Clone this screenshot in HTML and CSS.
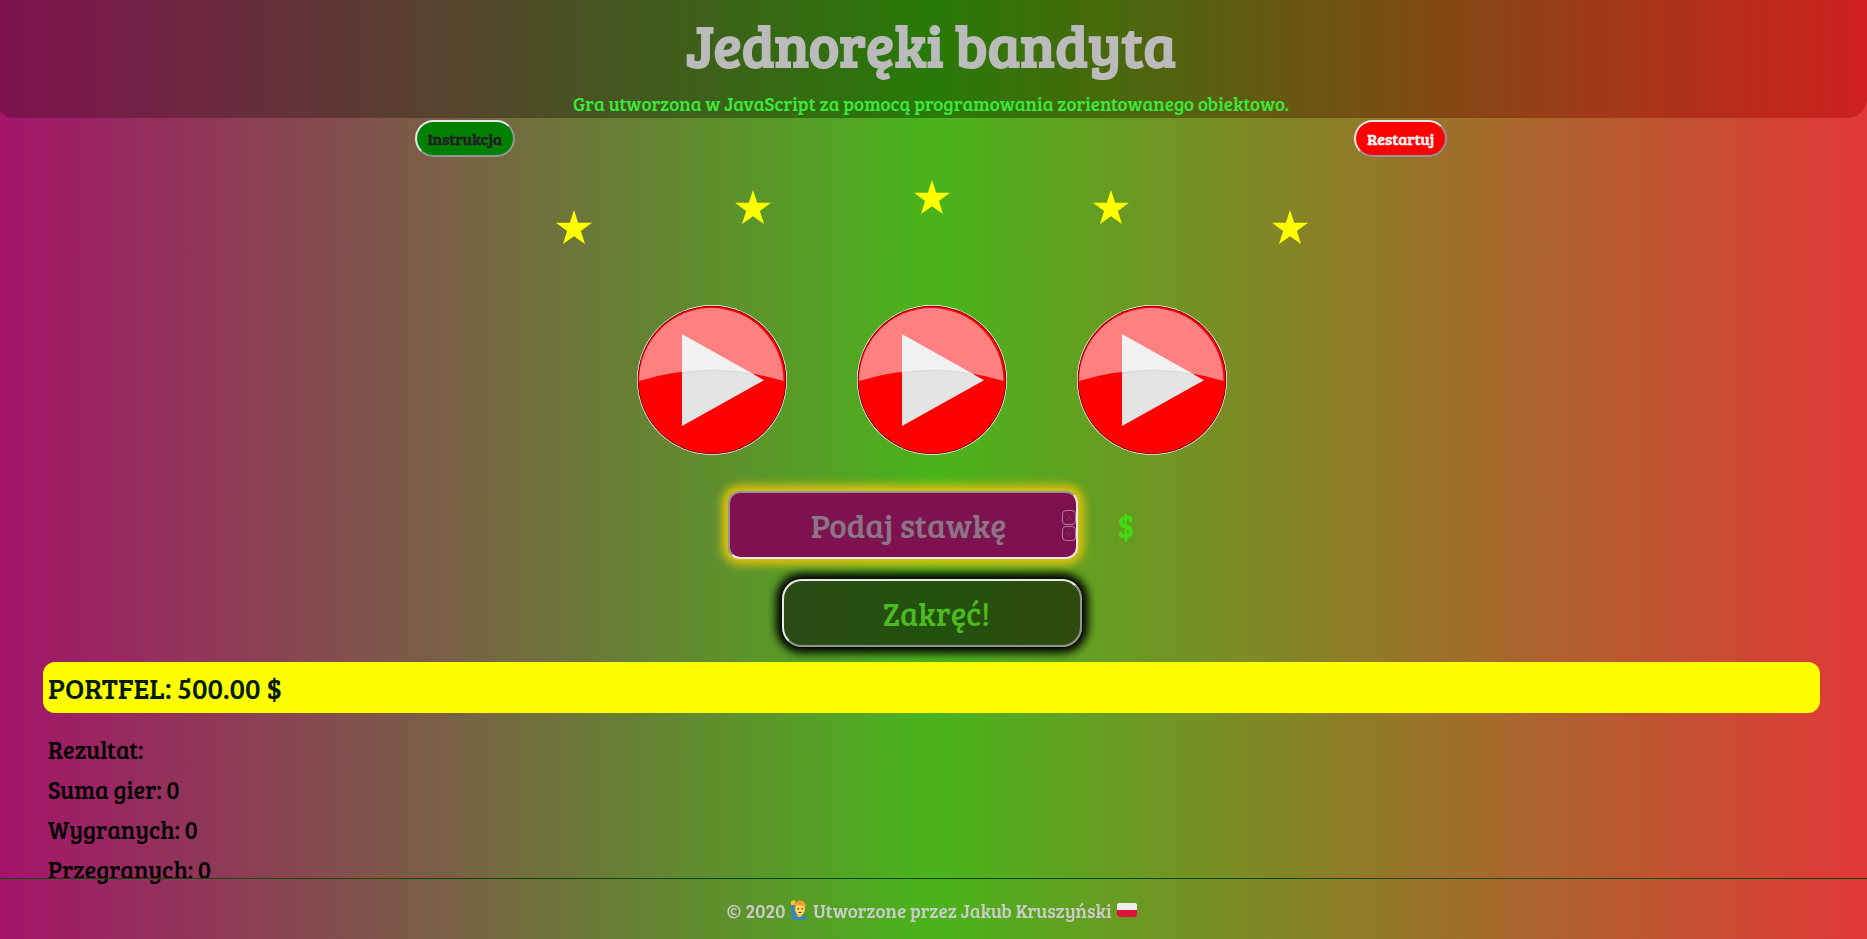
FILE: index.html
```html
<!DOCTYPE html>
<html lang="pl">
<head>
<meta charset="utf-8">
<title>Jednoręki bandyta</title>
<link rel="stylesheet" href="styles.css">
</head>
<body>
<svg class="sprites" aria-hidden="true">
  <symbol id="star" viewBox="0 0 36 34"><path fill="#ff0" d="M18 0l4.2 12.8H36L24.9 21l4.1 13-11-7.800L7 34l4.100-13L0 12.800h13.800z"/></symbol>
  <symbol id="play" viewBox="0 0 150 150">
    <circle cx="75" cy="75" r="75" fill="#fff"/>
    <circle cx="75" cy="75" r="74.300" fill="#600"/>
    <circle cx="75" cy="75" r="73.500" fill="red"/>
    <path fill="#ff8080" d="M2 76A72.250 73 0 0 1 146.500 76Q74 54 2 76z"/>
    <path fill="#e4e4e4" d="M45 29.300L127 75.300L45 121z"/>
    <path fill="#f1f1f1" d="M45 29.300L117 69.500Q80 62 45 67.700z"/>
    <path fill="none" stroke="#d9d9d9" d="M45 67.700Q80 62 117 69.500"/>
  </symbol>
</svg>
<div class="page">
  <header class="header">
    <h1 class="title">Jednoręki bandyta</h1>
    <p class="subtitle">Gra utworzona w JavaScript za pomocą programowania zorientowanego obiektowo.</p>
  </header>
  <div class="actions">
    <button class="pill pill-green" type="button">Instrukcja</button>
    <button class="pill pill-red" type="button">Restartuj</button>
  </div>
  <main class="game">
    <div class="stars">
      <svg class="star star-low"><use href="#star"/></svg>
      <svg class="star star-mid"><use href="#star"/></svg>
      <svg class="star"><use href="#star"/></svg>
      <svg class="star star-mid"><use href="#star"/></svg>
      <svg class="star star-low"><use href="#star"/></svg>
    </div>
    <div class="reels">
      <svg class="reel"><use href="#play"/></svg>
      <svg class="reel"><use href="#play"/></svg>
      <svg class="reel"><use href="#play"/></svg>
    </div>
    <div class="bid">
      <div class="bid-field">
        <input class="bid-input" id="bid" type="text" inputmode="numeric" placeholder="Podaj stawkę" aria-label="Podaj stawkę">
        <div class="spinner">
          <button class="step" type="button" aria-label="Więcej"><svg class="chevron" viewBox="0 0 8 6"><path d="M1 5l3-3 3 3"/></svg></button>
          <button class="step" type="button" aria-label="Mniej"><svg class="chevron" viewBox="0 0 8 6"><path d="M1 1l3 3 3-3"/></svg></button>
        </div>
      </div>
      <label class="currency" for="bid">$</label>
    </div>
    <button class="spin" type="button">Zakręć!</button>
    <section class="panel">
      <p class="wallet">PORTFEL: 500.00 $</p>
      <p class="stat">Rezultat:</p>
      <p class="stat">Suma gier: 0</p>
      <p class="stat">Wygranych: 0</p>
      <p class="stat">Przegranych: 0</p>
    </section>
  </main>
</div>
<footer class="footer">
  <span>© 2020</span>
  <svg class="person" viewBox="0 0 16 20">
    <path fill="#3f83bd" d="M0 5h4v7l3 3h5q3 1 3.500 5H1Q0 15 0 5z"/>
    <path fill="#fbc02d" d="M0 1l4-1 1 5H0zM6 13h5v3q-2.500 2-5 0z"/>
    <ellipse cx="9" cy="9" rx="5" ry="6" fill="#ffd75e"/>
    <path fill="#ff9b2f" d="M4 8Q3 1 9 0.500Q16 1 14.500 8L13 6 6 5z"/>
    <path fill="#5d4037" d="M6.500 8h1.500v1.500H6.500zM10.500 8H12v1.500h-1.500zM7.500 12h3v1h-3z"/>
  </svg>
  <span>Utworzone przez Jakub Kruszyński</span>
  <svg class="flag" viewBox="0 0 20 14">
    <rect width="20" height="14" rx="2" fill="#eee"/>
    <path fill="#dc143c" d="M0 7h20v5q0 2-2 2H2q-2 0-2-2z"/>
  </svg>
</footer>
</body>
</html>
```
FILE: styles.css
```css
* { box-sizing: border-box; }

body {
  margin: 0;
  min-height: 100vh;
  background: linear-gradient(to right, #a4146a, #4ab41b 50%, #e23838);
  font-family: "Bree Serif", "DejaVu Serif Condensed", "DejaVu Serif", serif;
}

h1, p { margin: 0; }
button, input { font-family: inherit; }

.sprites { display: none; }
.page { margin-left: -5px; }

.header {
  padding: 6px 0 0;
  border-radius: 0 0 20px 20px;
  background: linear-gradient(to right, #801150, #287a08 50%, #d02020);
  text-align: center;
}
.title {
  color: #bbb;
  font-size: 58px;
  line-height: 76px;
}
.subtitle {
  padding-top: 8px;
  color: #3be83b;
  font-size: 19px;
  line-height: 28px;
}

.actions {
  display: flex;
  justify-content: space-around;
  padding-top: 2px;
}
.pill {
  height: 37px;
  padding: 0 11px;
  border: 2px outset #e8e8e8;
  border-radius: 20px;
  font-size: 16px;
  font-weight: bold;
}
.pill-green { background: green; color: #222; }
.pill-red { background: red; color: #eee; }

.game {
  display: flex;
  flex-direction: column;
  align-items: center;
  padding: 0 47px 0 48px;
}

.stars {
  display: flex;
  gap: 143px;
  padding-top: 23px;
}
.star { width: 36px; height: 34px; }
.star-mid { margin-top: 10px; }
.star-low { margin-top: 30px; }

.reels {
  display: flex;
  gap: 70px;
  padding-top: 61px;
}
.reel { width: 150px; height: 150px; }

.bid {
  display: flex;
  align-items: center;
  gap: 39px;
  padding-top: 36px;
}
.bid-field { position: relative; }
.bid-input {
  display: block;
  width: 350px;
  height: 68px;
  padding: 0 10px 2px 20px;
  border: 2px inset #e8e8e8;
  border-radius: 12px;
  background: #801150;
  box-shadow: 0 0 8px 6px #dcc010;
  color: #ccc;
  font-size: 33px;
  text-align: center;
}
.bid-input::placeholder {
  color: #96708a;
  opacity: 1;
  text-shadow: 0 0 2px #444;
}
.spinner {
  position: absolute;
  top: 19px;
  right: 2px;
  display: grid;
  gap: 1px;
}
.step {
  display: grid;
  place-items: center;
  width: 14px;
  height: 15px;
  padding: 0;
  border: 1px solid #b07898;
  border-radius: 4px;
  background: none;
}
.chevron { width: 8px; height: 6px; fill: none; stroke: #5a4a50; }
.currency { color: #3fdc14; font-size: 32px; }

.spin {
  width: 300px;
  height: 68px;
  margin-top: 20px;
  padding: 0 0 0 10px;
  border: 2px outset #e8e8e8;
  border-radius: 20px;
  background: linear-gradient(to right, #2b4a14, #22520e 50%, #304a0e);
  box-shadow: 0 0 8px 6px #000;
  color: #4cba20;
  font-size: 32px;
}

.panel { align-self: stretch; padding-top: 15px; }
.wallet {
  margin-bottom: 17px;
  padding-left: 5px;
  border-radius: 12px;
  background: #ff0;
  color: #021c02;
  font-size: 29px;
  line-height: 51px;
}
.stat {
  padding-left: 5px;
  font-size: 24px;
  line-height: 40px;
}

.footer {
  position: fixed;
  right: 0;
  bottom: 0;
  left: 0;
  display: flex;
  align-items: center;
  justify-content: center;
  gap: 5px;
  height: 61px;
  padding: 2px 4px 0 0;
  border-top: 1px solid #064806;
  color: #ccc;
  font-size: 19px;
}
.person { width: 18px; height: 20px; }
.flag { width: 20px; height: 14px; }
```
